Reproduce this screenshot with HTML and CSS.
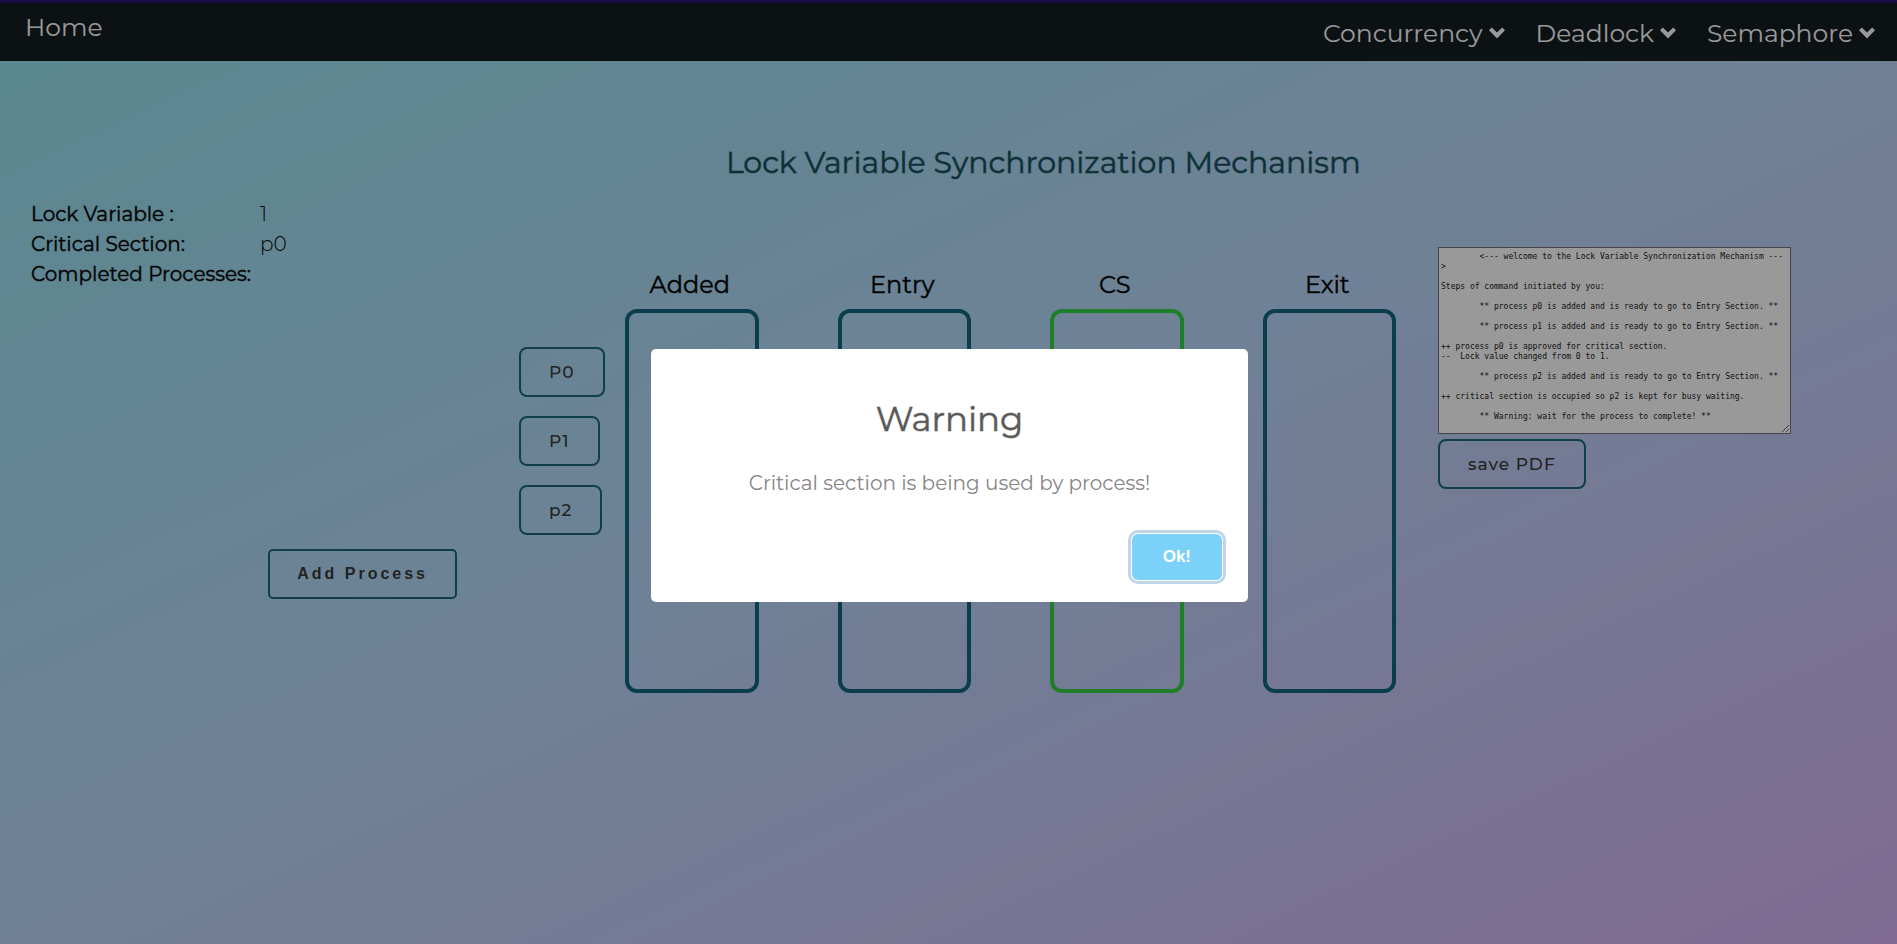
FILE: index.html
```html
<!DOCTYPE html>
<html lang="en">
<head>
<meta charset="utf-8">
<title>Lock Variable Synchronization Mechanism</title>
<link rel="stylesheet" href="styles.css">
</head>
<body>
<header class="navbar">
  <a class="nav-link nav-home" href="#">Home</a>
  <nav class="nav-menu">
    <a class="nav-link" href="#">Concurrency <svg class="chevron" viewBox="0 0 18 14"><path d="M1 4.2 3.800 1.400 9 6.500 14.200 1.400 17 4.200 9 12.400Z"/></svg></a>
    <a class="nav-link" href="#">Deadlock <svg class="chevron" viewBox="0 0 18 14"><path d="M1 4.2 3.800 1.400 9 6.500 14.200 1.400 17 4.200 9 12.400Z"/></svg></a>
    <a class="nav-link" href="#">Semaphore <svg class="chevron" viewBox="0 0 18 14"><path d="M1 4.2 3.800 1.400 9 6.500 14.200 1.400 17 4.200 9 12.400Z"/></svg></a>
  </nav>
</header>

<h1 class="page-title">Lock Variable Synchronization Mechanism</h1>

<main class="board">
  <section class="side">
    <table class="status">
      <tr><th scope="row">Lock Variable :</th><td>1</td></tr>
      <tr><th scope="row">Critical Section:</th><td>p0</td></tr>
      <tr><th scope="row">Completed Processes:</th><td></td></tr>
    </table>
    <button class="btn btn-add" type="button">Add Process</button>
  </section>

  <section class="processes">
    <button class="btn" type="button">P0</button>
    <button class="btn" type="button">P1</button>
    <button class="btn" type="button">p2</button>
  </section>

  <section class="lanes">
    <div class="lane"><h2 class="lane-title">Added</h2><div class="lane-box"></div></div>
    <div class="lane"><h2 class="lane-title">Entry</h2><div class="lane-box"></div></div>
    <div class="lane"><h2 class="lane-title">CS</h2><div class="lane-box lane-box-busy"></div></div>
    <div class="lane"><h2 class="lane-title">Exit</h2><div class="lane-box"></div></div>
  </section>

  <section class="log">
    <textarea class="log-text" aria-label="Command log">
	&lt;--- welcome to the Lock Variable Synchronization Mechanism ---&gt;

Steps of command initiated by you:

	** process p0 is added and is ready to go to Entry Section. **

	** process p1 is added and is ready to go to Entry Section. **

++ process p0 is approved for critical section.
--  Lock value changed from 0 to 1.

	** process p2 is added and is ready to go to Entry Section. **

++ critical section is occupied so p2 is kept for busy waiting.

	** Warning: wait for the process to complete! **
</textarea>
    <button class="btn" type="button">save PDF</button>
  </section>
</main>

<div class="overlay">
  <div class="modal" role="dialog" aria-modal="true" aria-labelledby="modal-title">
    <h2 class="modal-title" id="modal-title">Warning</h2>
    <p class="modal-text">Critical section is being used by process!</p>
    <div class="modal-footer"><button class="modal-ok" type="button">Ok!</button></div>
  </div>
</div>
</body>
</html>
```
FILE: styles.css
```css
* { box-sizing: border-box; }

body {
  margin: 0;
  min-height: 100vh;
  overflow: hidden;
  font-family: Montserrat, Inter, sans-serif;
  color: #000;
  background: linear-gradient(155deg, #93e4f0 0%, #bad8fb 50%, #d4b2f2 100%);
}

.navbar {
  display: flex;
  justify-content: space-between;
  align-items: flex-start;
  height: 61px;
  padding: 0 21px 0 25px;
  border-top: 3px solid #2a1670;
  background: #151d20;
}

.nav-link {
  display: flex;
  align-items: center;
  gap: 5px;
  font-size: 25px;
  font-weight: 400;
  line-height: 32px;
  color: #fff;
  text-decoration: none;
}

.nav-home { margin-top: 8px; }

.nav-menu {
  display: flex;
  gap: 30px;
  margin-top: 14px;
}

.chevron {
  width: 18px;
  height: 14px;
  fill: #fff;
}

.page-title {
  margin: 82px 0 17px;
  padding-left: 10%;
  font-size: 30px;
  font-weight: 400;
  line-height: 39px;
  text-align: center;
  color: #17505b;
  -webkit-text-stroke: 1px rgba(23, 80, 91, 0.5);
}

.board {
  display: grid;
  grid-template-columns: 519px 106px minmax(0, 771fr) minmax(0, 395fr);
  padding-right: 106px;
}

.side {
  display: flex;
  flex-direction: column;
  justify-content: space-between;
  align-items: flex-end;
  height: 400px;
  padding: 0 62px 0 31px;
}

.status {
  align-self: flex-start;
  border-collapse: collapse;
  font-size: 20px;
  line-height: 30px;
}

.status th {
  padding: 0 9px 0 0;
  font-weight: 400;
  text-align: left;
  -webkit-text-stroke: 1px rgba(0, 0, 0, 0.4);
}

.status td {
  padding: 0;
  font-weight: 300;
}

.btn {
  height: 50px;
  padding: 0 28px;
  border: 2px solid #1c6c76;
  border-radius: 8px;
  background: transparent;
  font-family: inherit;
  font-size: 17px;
  font-weight: 500;
  letter-spacing: 1px;
  color: #3a3a3a;
}

.btn-add {
  padding: 0 27px;
  border-radius: 5px;
  font-family: "Liberation Sans", Arial, sans-serif;
  font-size: 16px;
  font-weight: 700;
  letter-spacing: 3px;
}

.processes {
  display: flex;
  flex-direction: column;
  align-items: flex-start;
  gap: 19px;
  padding-top: 148px;
}

.lanes {
  display: grid;
  grid-template-columns: repeat(4, 1fr);
  gap: 79px;
  padding-top: 70px;
}

.lane-title {
  margin: 0 0 8px;
  padding-right: 4px;
  font-size: 24px;
  font-weight: 400;
  line-height: 32px;
  text-align: center;
  -webkit-text-stroke: 1px rgba(0, 0, 0, 0.4);
}

.lane-box {
  height: 384px;
  border: 4px solid #12687f;
  border-radius: 12px;
}

.lane-box-busy { border-color: #33d142; }

.log {
  display: flex;
  flex-direction: column;
  align-items: flex-start;
  gap: 5px;
  padding: 48px 0 0 42px;
}

.log-text {
  width: 100%;
  height: 187px;
  margin: 0;
  padding: 4px 6px 4px 2px;
  border: 1px solid #767676;
  border-radius: 0;
  overflow: hidden;
  background: #fff;
  font-family: "DejaVu Sans Mono", monospace;
  font-size: 8px;
  line-height: 10px;
  color: #222;
}

.overlay {
  position: fixed;
  inset: 0;
  display: flex;
  align-items: center;
  justify-content: center;
  background: rgba(0, 0, 0, 0.4);
}

.modal {
  width: 597px;
  margin: 7px 0 0 2px;
  border-radius: 5px;
  background: #fff;
  text-align: center;
}

.modal-title {
  margin: 0;
  padding: 48px 20px 24px;
  font-size: 34px;
  font-weight: 400;
  line-height: 44px;
  color: #595959;
  -webkit-text-stroke: 1px rgba(89, 89, 89, 0.5);
}

.modal-text {
  margin: 0;
  padding: 5px 20px 25px;
  font-size: 20px;
  font-weight: 400;
  line-height: 26px;
  color: #858585;
}

.modal-footer {
  padding: 13px 26px 22px;
  text-align: right;
}

.modal-ok {
  display: inline-block;
  height: 46px;
  padding: 0 31px;
  border: 0;
  border-radius: 6px;
  background: #7cd1f9;
  box-shadow: 0 0 0 1px #fff, 0 0 0 4px rgba(43, 114, 165, 0.29);
  font-family: "Liberation Sans", Arial, sans-serif;
  font-size: 17px;
  font-weight: 700;
  vertical-align: top;
  color: #fff;
}
```
